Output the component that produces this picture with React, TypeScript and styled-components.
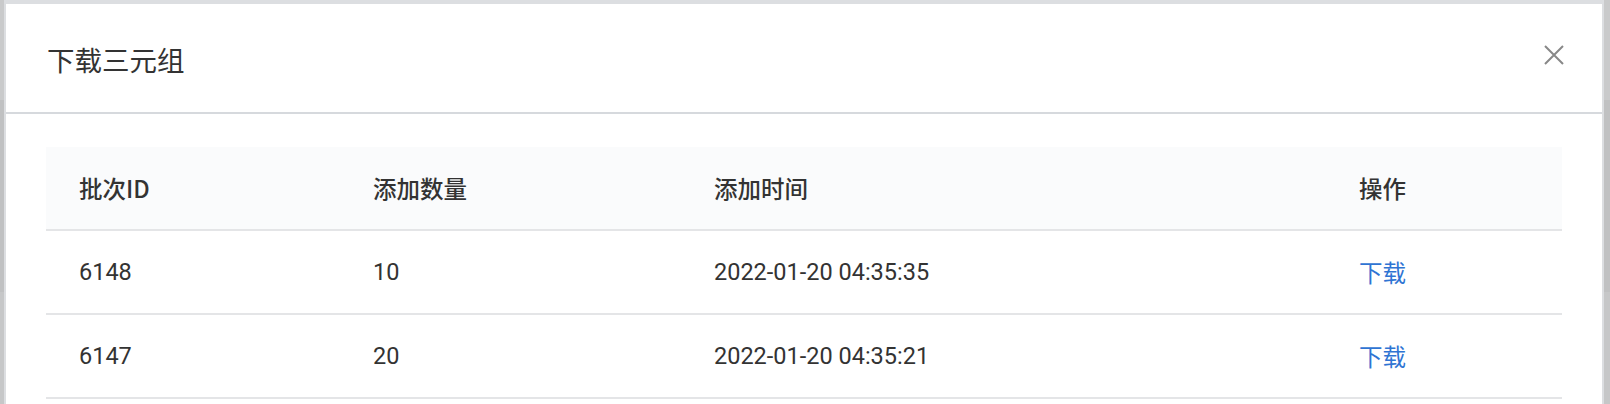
import React from "react"
import styled, { createGlobalStyle } from "styled-components"

const GlobalStyle = createGlobalStyle`
  html, body {
    margin: 0;
    padding: 0;
    background: #c4c5c6;
  }
  body {
    font-family: Roboto, "Noto Sans CJK SC", "Noto Sans", sans-serif;
    color: #333;
  }
`

const Page = styled.div`
  display: flex;
  height: 404px;
  overflow: hidden;
  padding: 0 6px 0 4px;
  background: linear-gradient(
    to bottom,
    #c9cacb 0,
    #c9cacb 100px,
    #c0c1c2 100px,
    #c0c1c2 292px,
    #c6c7c8 292px
  );
`

const Modal = styled.div`
  flex: 1;
  display: flex;
  flex-direction: column;
  background: #fff;
  border-top: 4px solid #dcdee1;
  border-left: 2px solid #dcdee1;
  border-right: 2px solid #dcdee1;
`

const Header = styled.div`
  height: 108px;
  display: flex;
  align-items: center;
  justify-content: space-between;
  padding: 0 38px 0 41px;
  border-bottom: 2px solid #d6d9dd;
`

const Title = styled.h2`
  margin: 0;
  font-family: "Noto Sans CJK SC", sans-serif;
  font-size: 27.5px;
  font-weight: 400;
  color: #333;
  line-height: 1;
  padding-top: 4px;
`

const CloseButton = styled.button`
  width: 20px;
  height: 20px;
  padding: 0;
  border: none;
  background: none;
  cursor: pointer;
  display: flex;
  margin-top: -6px;
`

const Body = styled.div`
  padding: 33px 40px 0 40px;
`

const Table = styled.table`
  width: 1516px;
  border-collapse: collapse;
  table-layout: fixed;
`

const HeadCell = styled.th`
  height: 82px;
  padding: 0 0 0 33px;
  text-align: left;
  background: #fafbfc;
  border-bottom: 2px solid #e4e5e7;
  font-family: "Noto Sans CJK SC", Roboto, sans-serif;
  font-size: 23.5px;
  font-weight: 500;
  color: #333;
`

const Cell = styled.td`
  height: 82px;
  padding: 0 0 0 33px;
  border-bottom: 2px solid #e4e5e7;
  font-size: 23.5px;
  color: #333;
`

const LinkText = styled.a`
  font-family: "Noto Sans CJK SC", sans-serif;
  color: #2f74d3;
  text-decoration: none;
  cursor: pointer;
`

const rows = [
  { id: "6148", count: "10", time: "2022-01-20 04:35:35" },
  { id: "6147", count: "20", time: "2022-01-20 04:35:21" },
]

const CloseIcon = () => (
  <svg width="20" height="20" viewBox="0 0 20 20">
    <path d="M1 1 L19 19 M19 1 L1 19" stroke="#888" strokeWidth="2" fill="none" />
  </svg>
)

export default function App() {
  return (
    <>
      <GlobalStyle />
      <Page>
        <Modal>
          <Header>
            <Title>下载三元组</Title>
            <CloseButton aria-label="close">
              <CloseIcon />
            </CloseButton>
          </Header>
          <Body>
            <Table>
              <colgroup>
                <col style={{ width: 294 }} />
                <col style={{ width: 341 }} />
                <col style={{ width: 645 }} />
                <col style={{ width: 236 }} />
              </colgroup>
              <thead>
                <tr>
                  <HeadCell>批次ID</HeadCell>
                  <HeadCell>添加数量</HeadCell>
                  <HeadCell>添加时间</HeadCell>
                  <HeadCell>操作</HeadCell>
                </tr>
              </thead>
              <tbody>
                {rows.map((r) => (
                  <tr key={r.id}>
                    <Cell>{r.id}</Cell>
                    <Cell>{r.count}</Cell>
                    <Cell>{r.time}</Cell>
                    <Cell>
                      <LinkText>下载</LinkText>
                    </Cell>
                  </tr>
                ))}
              </tbody>
            </Table>
          </Body>
        </Modal>
      </Page>
    </>
  )
}
